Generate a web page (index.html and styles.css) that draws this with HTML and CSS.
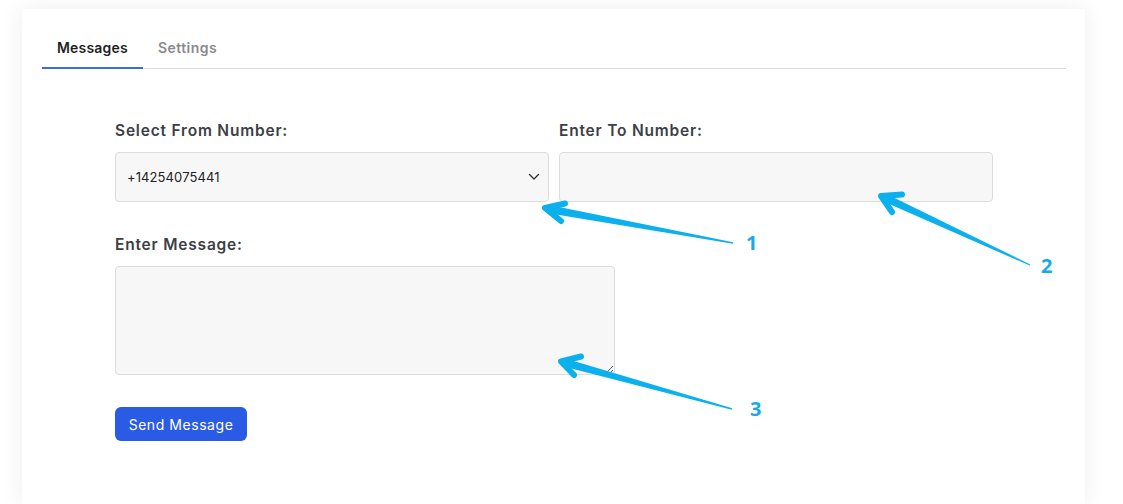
FILE: index.html
```html
<!DOCTYPE html>
<html lang="en">
<head>
<meta charset="utf-8">
<title>Messages</title>
<link rel="stylesheet" href="styles.css">
</head>
<body>
<div class="page">
  <div class="card">
    <div class="tabs">
      <div class="tab active">Messages</div>
      <div class="tab">Settings</div>
    </div>
    <form class="form">
      <div class="row">
        <div class="field">
          <label class="label">Select From Number:</label>
          <div class="select">
            <span class="select-value">+14254075441</span>
            <svg class="chevron" width="12" height="8" viewBox="0 0 12 8"><path d="M1.5 1.5 L6 6 L10.5 1.5" fill="none" stroke="#333" stroke-width="1.4" stroke-linecap="round" stroke-linejoin="round"/></svg>
          </div>
        </div>
        <div class="field">
          <label class="label">Enter To Number:</label>
          <input class="input" type="text">
        </div>
      </div>
      <div class="field message">
        <label class="label">Enter Message:</label>
        <textarea class="textarea"></textarea>
      </div>
      <button class="btn" type="button">Send Message</button>
    </form>
  </div>
</div>
<svg class="annot" width="1123" height="504" viewBox="0 0 1123 504">
  <g fill="#0cb0ec" stroke="#0cb0ec">
    <polygon stroke="none" points="550.2,213.4 551.6,205.5 733.1,242.3 732.9,243.7"/>
    <polyline fill="none" stroke-width="6" stroke-linecap="round" stroke-linejoin="round" points="565,203.5 545,208 561,221"/>
    <polygon stroke="none" points="884.6,202.0 888.0,194.7 1030.3,264.4 1029.7,265.6"/>
    <polyline fill="none" stroke-width="6" stroke-linecap="round" stroke-linejoin="round" points="902,194.5 881,196 892,212"/>
    <polygon stroke="none" points="565.6,367.0 567.8,359.3 732.2,408.3 731.8,409.7"/>
    <polyline fill="none" stroke-width="6" stroke-linecap="round" stroke-linejoin="round" points="581,356.5 561,361.5 574,375"/>
  </g>
  <text class="num" x="746" y="250">1</text>
  <text class="num" x="1041" y="273">2</text>
  <text class="num" x="750" y="416">3</text>
</svg>
</body>
</html>
```
FILE: styles.css
```css
html, body {
  margin: 0;
  padding: 0;
  background: #ffffff;
}
body {
  font-family: "Inter", "Open Sans", sans-serif;
  width: 1123px;
  height: 504px;
  overflow: hidden;
  position: relative;
}
.page {
  padding: 9px 38px 0 22px;
}
.card {
  background: #fff;
  box-shadow: 0 0 22px rgba(0, 0, 0, 0.07);
  padding: 29px 19px 0 20px;
  min-height: 495px;
  box-sizing: border-box;
}
.tabs {
  display: flex;
  border-bottom: 1px solid #dcdcdc;
}
.tab {
  padding: 0 15px 9px;
  font-size: 14px;
  line-height: 20px;
  font-weight: 600;
  color: #8a8a8a;
  letter-spacing: 0.2px;
  margin-bottom: -1px;
  border-bottom: 2px solid transparent;
}
.tab + .tab {
  letter-spacing: 0.45px;
}
.tab.active {
  color: #1f1f1f;
  border-bottom-color: #3d6be3;
}
.form {
  width: 878px;
  margin: 0 auto;
  padding-top: 52px;
}
.row {
  display: grid;
  grid-template-columns: 434px 434px;
  column-gap: 10px;
}
.field {
  display: flex;
  flex-direction: column;
}
.label {
  font-size: 15.5px;
  line-height: 20px;
  font-weight: 600;
  color: #3c4047;
  letter-spacing: 0.8px;
  margin-bottom: 11px;
}
.select, .input, .textarea {
  box-sizing: border-box;
  background: #f7f7f7;
  border: 1px solid #dcdcdc;
  border-radius: 4px;
  margin: 0;
}
.select {
  height: 50px;
  display: flex;
  align-items: center;
  justify-content: space-between;
  padding: 0 8px 0 11px;
}
.select-value {
  font-size: 13px;
  color: #222;
  letter-spacing: 0.1px;
}
.chevron {
  display: block;
}
.input {
  height: 50px;
  width: 100%;
}
.message {
  margin-top: 33px;
}
.textarea {
  width: 500px;
  height: 109px;
  resize: vertical;
  display: block;
}
.btn {
  margin-top: 32px;
  width: 132px;
  height: 34px;
  border: none;
  border-radius: 6px;
  background: #2a5be5;
  color: #fff;
  font-family: "Inter", "Open Sans", sans-serif;
  font-size: 14px;
  letter-spacing: 0.55px;
  padding: 0;
}
.annot {
  position: absolute;
  top: 0;
  left: 0;
  pointer-events: none;
}
.num {
  font-family: "Open Sans", sans-serif;
  font-weight: 700;
  font-size: 20px;
  fill: #17aae4;
}
```
